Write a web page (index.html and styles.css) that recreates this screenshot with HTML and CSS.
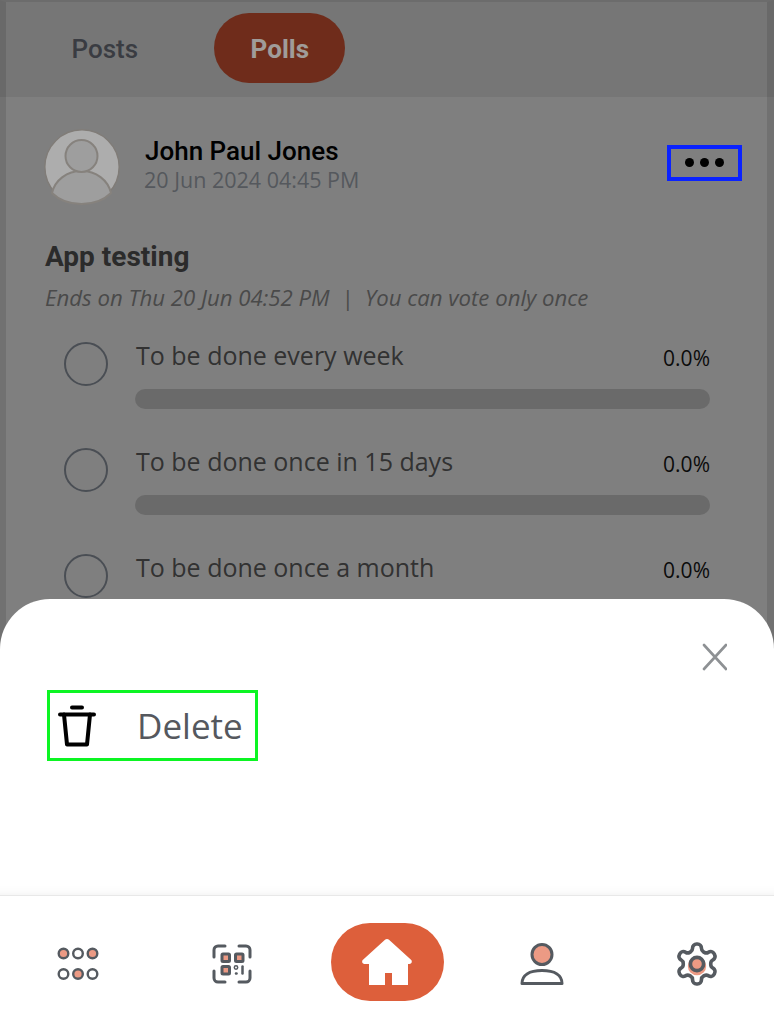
FILE: index.html
```html
<!DOCTYPE html>
<html lang="en">
<head>
    <meta charset="UTF-8">
    <meta name="viewport" content="width=device-width, initial-scale=1.0">
    <title>Polls</title>
    <link rel="stylesheet" href="styles.css">
</head>
<body>
    <div class="app">
        <main class="screen">
            <div class="tabs">
                <a class="tab">Posts</a>
                <a class="tab tab-active">Polls</a>
            </div>

            <section class="post">
                <div class="post-head">
                    <svg class="avatar" viewBox="0 0 76 76">
                        <circle cx="38" cy="38" r="37.200" fill="#f8f8f8" stroke="#b8b2ac" stroke-width="1.500"/>
                        <path d="M8 64c3-13 15-22 29.500-22S64 51 67 64c-7 7-17 11-29.500 11S15 71 8 64z" fill="#e2e2e2" stroke="#c0bab4" stroke-width="2"/>
                        <circle cx="37.500" cy="27" r="16" fill="#e2e2e2" stroke="#c0bab4" stroke-width="2"/>
                    </svg>
                    <div class="author">
                        <div class="author-name">John Paul Jones</div>
                        <div class="author-date">20 Jun 2024 04:45 PM</div>
                    </div>
                    <button class="more"><i></i><i></i><i></i></button>
                </div>

                <h2 class="poll-title">App testing</h2>
                <p class="poll-note">Ends on Thu 20 Jun 04:52 PM &nbsp;|&nbsp; You can vote only once</p>

                <div class="option">
                    <span class="radio"></span>
                    <div class="option-body">
                        <div class="option-top"><span class="label">To be done every week</span><span class="percent">0.0%</span></div>
                        <div class="bar"></div>
                    </div>
                </div>
                <div class="option">
                    <span class="radio"></span>
                    <div class="option-body">
                        <div class="option-top"><span class="label">To be done once in 15 days</span><span class="percent">0.0%</span></div>
                        <div class="bar"></div>
                    </div>
                </div>
                <div class="option">
                    <span class="radio"></span>
                    <div class="option-body">
                        <div class="option-top"><span class="label">To be done once a month</span><span class="percent">0.0%</span></div>
                        <div class="bar"></div>
                    </div>
                </div>
            </section>

            <div class="overlay"></div>

            <div class="sheet">
                <button class="close">
                    <svg width="26" height="28" viewBox="0 0 26 28"><path d="M3 2l22 24M25 2L3 26" fill="none" stroke="#8e9194" stroke-width="2.600" stroke-linecap="round"/></svg>
                </button>
                <button class="delete">
                    <svg width="38" height="42" viewBox="0 0 38 42" fill="none" stroke="#000" stroke-linecap="round" stroke-linejoin="round">
                        <path d="M14 2.500h10" stroke-width="4"/>
                        <path d="M2 9.500h34" stroke-width="4"/>
                        <path d="M6 9.500l3 30h20l3-30" stroke-width="4"/>
                    </svg>
                    <span>Delete</span>
                </button>
            </div>
        </main>

        <nav class="nav">
            <a class="nav-item nav-menu">
                <svg width="44" height="36" viewBox="0 0 44 36" fill="#fff" stroke="#555a60" stroke-width="2.400">
                    <circle cx="7.500" cy="7.500" r="4.800" fill="#ec9a84"/>
                    <circle cx="22" cy="7.500" r="4.800"/>
                    <circle cx="36.500" cy="7.500" r="4.800" fill="#ec9a84"/>
                    <circle cx="7.500" cy="28" r="4.800"/>
                    <circle cx="22" cy="28" r="4.800" fill="#ec9a84"/>
                    <circle cx="36.500" cy="28" r="4.800"/>
                </svg>
            </a>
            <a class="nav-item">
                <svg width="40" height="40" viewBox="0 0 40 40" fill="none" stroke="#555a60" stroke-linecap="round">
                    <path d="M2 13V6a4 4 0 0 1 4-4h7M27 2h7a4 4 0 0 1 4 4v7M2 27v7a4 4 0 0 0 4 4h7M27 38h7a4 4 0 0 0 4-4v-7" stroke-width="3"/>
                    <rect x="10" y="10" width="7.500" height="7.500" rx="1" fill="#ec9a84" stroke-width="3"/>
                    <rect x="23.500" y="10" width="7.500" height="7.500" rx="1" fill="#ec9a84" stroke-width="3"/>
                    <rect x="10" y="22.500" width="7.500" height="7.500" rx="1" fill="#ec9a84" stroke-width="3"/>
                    <circle cx="24" cy="23.500" r="1.700" stroke-width="1.500"/>
                    <path d="M30.500 22.500v7" stroke-width="2.500"/>
                    <path d="M24 29.500h.5" stroke-width="2.500"/>
                </svg>
            </a>
            <a class="nav-item nav-home">
                <span class="home">
                    <svg width="52" height="48" viewBox="0 0 52 48" fill="#fff">
                        <path d="M26 1c.8 0 1.500.3 2 .8l22 20c1.600 1.500.7 4.200-1.500 4.200H47v21H31V35h-7v12H8V26H3.500c-2.200 0-3.200-2.700-1.500-4.200L24 1.800c.5-.5 1.200-.8 2-.8z"/>
                    </svg>
                </span>
            </a>
            <a class="nav-item">
                <svg width="44" height="44" viewBox="0 0 44 44" fill="none" stroke="#555a60" stroke-width="3">
                    <circle cx="22" cy="12.500" r="10" fill="#ec9a84"/>
                    <path d="M2 41.500c0-8 7-13 20-13s20 5 20 13z" stroke-linejoin="round"/>
                </svg>
            </a>
            <a class="nav-item">
                <svg width="48" height="48" viewBox="0 0 24 24" fill="none" stroke="#555a60" stroke-width="1.800" stroke-linecap="round" stroke-linejoin="round">
                    <path d="M12.220 2h-.44a2 2 0 0 0-2 2v.18a2 2 0 0 1-1 1.730l-.43.250a2 2 0 0 1-2 0l-.15-.08a2 2 0 0 0-2.730.730l-.22.380a2 2 0 0 0 .730 2.730l.15.100a2 2 0 0 1 1 1.720v.510a2 2 0 0 1-1 1.740l-.15.090a2 2 0 0 0-.730 2.730l.22.380a2 2 0 0 0 2.730.730l.15-.08a2 2 0 0 1 2 0l.43.250a2 2 0 0 1 1 1.730V20a2 2 0 0 0 2 2h.44a2 2 0 0 0 2-2v-.18a2 2 0 0 1 1-1.730l.43-.25a2 2 0 0 1 2 0l.15.080a2 2 0 0 0 2.730-.730l.22-.39a2 2 0 0 0-.730-2.730l-.15-.08a2 2 0 0 1-1-1.740v-.5a2 2 0 0 1 1-1.740l.15-.09a2 2 0 0 0 .730-2.730l-.22-.38a2 2 0 0 0-2.730-.730l-.15.080a2 2 0 0 1-2 0l-.43-.25a2 2 0 0 1-1-1.730V4a2 2 0 0 0-2-2z"/>
                    <circle cx="12" cy="13" r="4.600" fill="#ec9a84" stroke="none"/>
                    <circle cx="12" cy="12" r="3.300" fill="#ec9a84"/>
                </svg>
            </a>
        </nav>
    </div>
</body>
</html>
```

FILE: styles.css
```css
* {
    margin: 0;
    padding: 0;
    box-sizing: border-box;
}

body {
    width: 774px;
    height: 1024px;
    overflow: hidden;
    background-color: #fff;
    font-family: 'Open Sans', sans-serif;
}

button {
    background: none;
    border: none;
    font-family: inherit;
}

.app {
    display: flex;
    flex-direction: column;
    height: 1024px;
}

.screen {
    position: relative;
    height: 895px;
    overflow: hidden;
    background-color: #b7b7b7;
}

.tabs {
    display: flex;
    gap: 40px;
    height: 97px;
    padding: 13px 0 14px 36px;
    background-color: #a9a9a9;
}

.tab {
    padding: 2px 35.500px 0;
    border-radius: 35px;
    line-height: 68px;
    font-family: 'Roboto', sans-serif;
    font-size: 26px;
    font-weight: 500;
    color: #53575f;
}

.tab-active {
    padding: 2px 36px 0 37px;
    background-color: #9f4028;
    font-weight: 700;
    color: #e5e0dd;
}

.post {
    padding: 32px 32px 0 44px;
}

.post-head {
    display: flex;
    align-items: center;
}

.avatar {
    width: 76px;
    height: 76px;
    flex-shrink: 0;
}

.author {
    flex: 1;
    margin-top: -4px;
    margin-left: 25px;
}

.author-name {
    font-family: 'Roboto', sans-serif;
    font-size: 26px;
    font-weight: 500;
    line-height: 30px;
    color: #000;
}

.author-date {
    margin-left: -1px;
    font-size: 21.500px;
    line-height: 28px;
    color: #7a7f86;
}

.more {
    position: relative;
    z-index: 3;
    display: flex;
    align-items: center;
    justify-content: center;
    gap: 6px;
    width: 75px;
    height: 36px;
    margin-top: -9px;
    border: 4px solid #0a22ff;
}

.more i {
    width: 9px;
    height: 9px;
    border-radius: 50%;
    background-color: #000;
}

.poll-title {
    margin-top: 37px;
    margin-left: 1px;
    font-family: 'Roboto', sans-serif;
    font-size: 28px;
    font-weight: 700;
    line-height: 30px;
    color: #3e3e3e;
}

.poll-note {
    margin-top: 12px;
    margin-left: 1px;
    font-size: 22.200px;
    font-style: italic;
    line-height: 28px;
    color: #6a6a6a;
}

.option {
    display: flex;
    gap: 27px;
    height: 78px;
    margin: 28px 32px 0 20px;
}

.radio {
    width: 44px;
    height: 44px;
    margin-top: 2px;
    flex-shrink: 0;
    border: 2px solid #6a7079;
    border-radius: 50%;
}

.option-body {
    flex: 1;
}

.option-top {
    display: flex;
    justify-content: space-between;
    align-items: center;
    height: 32px;
}

.label {
    margin-top: -3px;
    margin-left: 1px;
    font-size: 25px;
    color: #484848;
}

.percent {
    margin-top: 4px;
    font-size: 21px;
    color: #111;
}

.bar {
    height: 20px;
    margin-top: 17px;
    border-radius: 10px;
    background-color: #999;
}

.overlay {
    position: absolute;
    inset: 0;
    z-index: 2;
    background-color: rgba(0, 0, 0, 0.3);
    border-top: 2px solid rgba(0, 0, 0, 0.08);
    border-left: 6px solid rgba(0, 0, 0, 0.1);
    border-right: 7px solid rgba(0, 0, 0, 0.1);
}

.sheet {
    position: absolute;
    left: 0;
    right: 0;
    bottom: 0;
    z-index: 3;
    height: 296px;
    padding: 44px 47px 0;
    background-color: #fff;
    border-radius: 50px 50px 0 0;
    box-shadow: inset 0 -12px 10px -10px rgba(0, 0, 0, 0.05);
}

.close {
    display: block;
    height: 28px;
    margin-left: auto;
}

.delete {
    display: flex;
    align-items: center;
    gap: 41px;
    width: 211px;
    height: 71px;
    margin-top: 19px;
    padding-left: 8px;
    border: 3px solid #0cf523;
}

.delete span {
    font-size: 35px;
    color: #55585e;
}

.nav {
    display: grid;
    grid-template-columns: repeat(5, 1fr);
    flex: 1;
    border-top: 1px solid #e8e8e8;
    background-color: #fff;
}

.nav-item {
    display: flex;
    align-items: center;
    justify-content: center;
    padding-top: 4px;
}

.nav-item > svg {
    margin-top: 4px;
}

.nav-menu {
    padding-left: 2px;
}

.nav-home {
    padding-left: 1px;
}

.home {
    display: flex;
    align-items: center;
    justify-content: center;
    width: 113px;
    height: 78px;
    border-radius: 39px;
    background-color: #dd5f3b;
}
```
